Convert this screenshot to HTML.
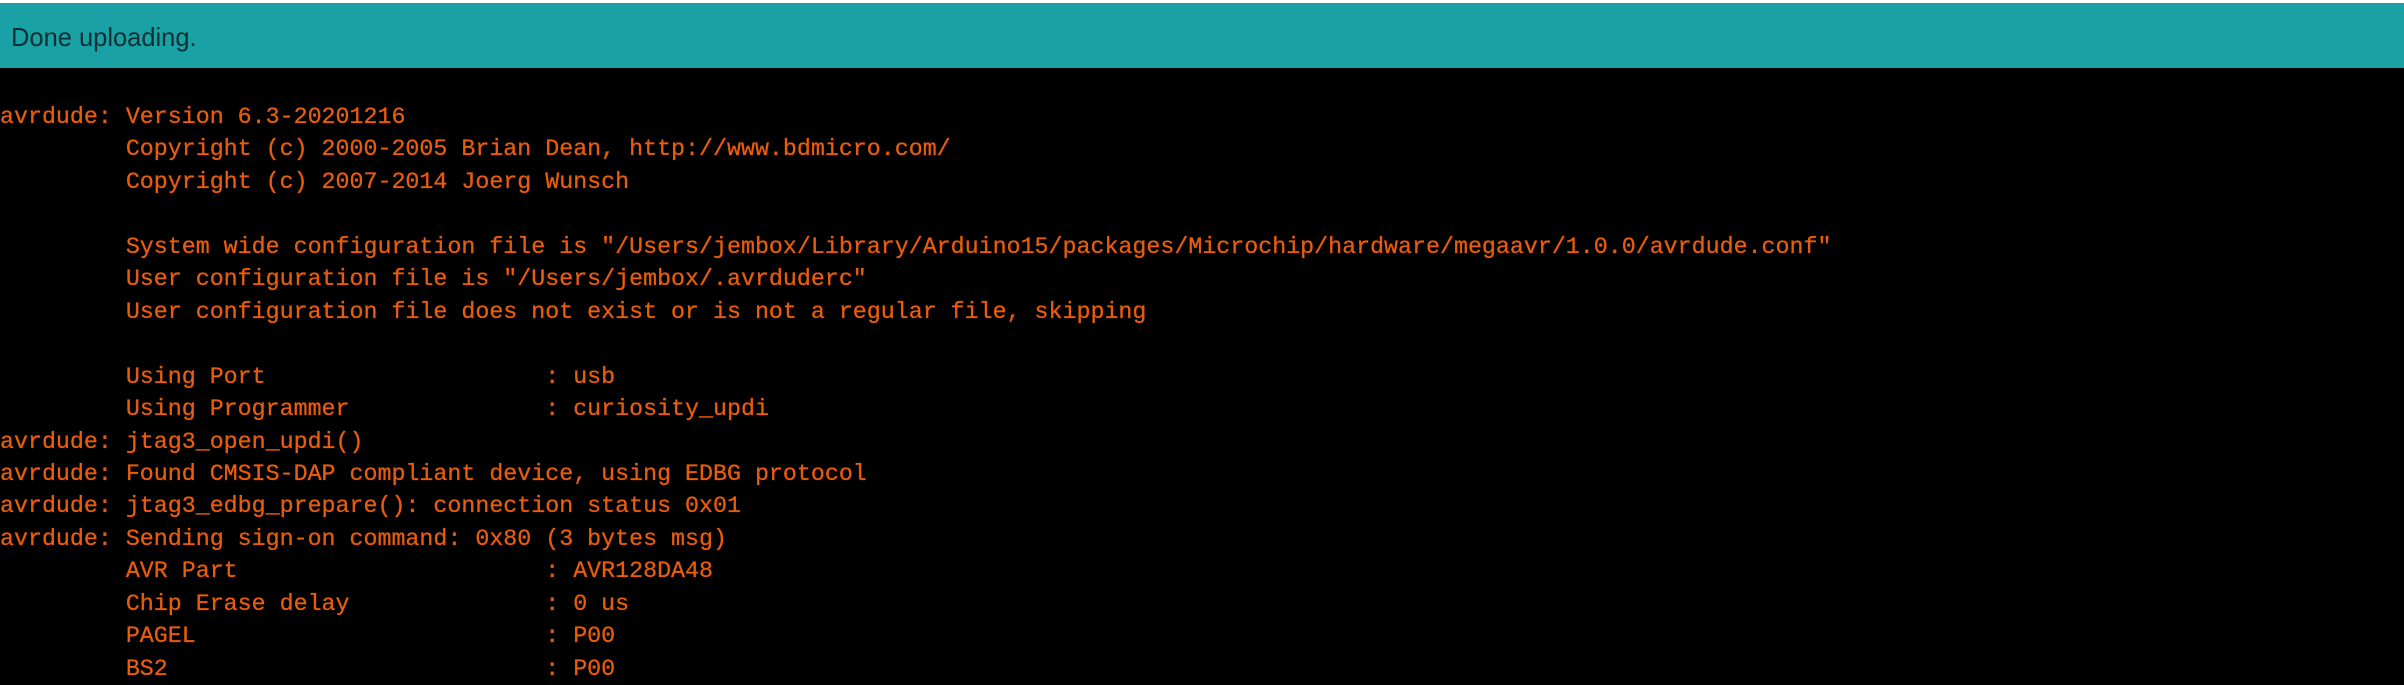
<!DOCTYPE html>
<html><head><meta charset="utf-8"><style>
html,body{margin:0;padding:0;background:#000;width:2404px;height:680px;overflow:hidden}
.top{position:absolute;left:0;top:0;width:2404px;height:3px;background:#fff}
.bar{position:absolute;left:0;top:3px;width:2404px;height:65px;background:#1aa1a6}
.bar span{position:absolute;left:11px;top:18px;font:26px/32px "Liberation Sans",sans-serif;color:#0c2f31;transform:scaleX(0.98);transform-origin:left}
pre{position:absolute;left:0;top:101px;margin:0;font:23.3px/32.45px "Liberation Mono",monospace;color:#e85c0c;-webkit-text-stroke:0.3px #e85c0c}
</style></head><body>
<div class="top"></div>
<div class="bar"><span>Done uploading.</span></div>
<pre>avrdude: Version 6.3-20201216
         Copyright (c) 2000-2005 Brian Dean, http://www.bdmicro.com/
         Copyright (c) 2007-2014 Joerg Wunsch

         System wide configuration file is "/Users/jembox/Library/Arduino15/packages/Microchip/hardware/megaavr/1.0.0/avrdude.conf"
         User configuration file is "/Users/jembox/.avrduderc"
         User configuration file does not exist or is not a regular file, skipping

         Using Port                    : usb
         Using Programmer              : curiosity_updi
avrdude: jtag3_open_updi()
avrdude: Found CMSIS-DAP compliant device, using EDBG protocol
avrdude: jtag3_edbg_prepare(): connection status 0x01
avrdude: Sending sign-on command: 0x80 (3 bytes msg)
         AVR Part                      : AVR128DA48
         Chip Erase delay              : 0 us
         PAGEL                         : P00
         BS2                           : P00
</pre>
</body></html>
